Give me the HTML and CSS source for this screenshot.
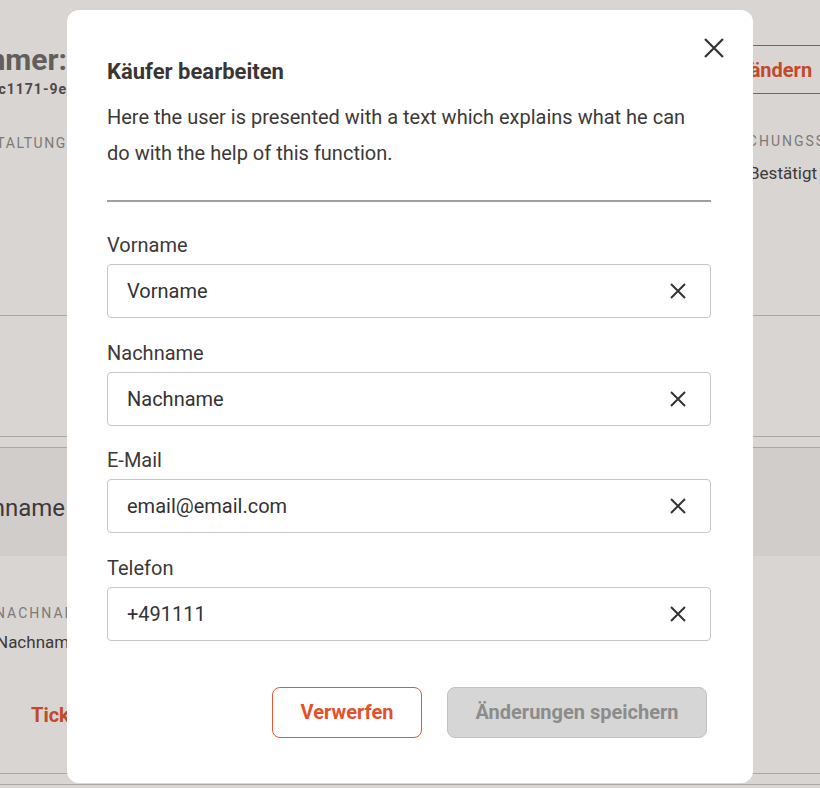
FILE: index.html
```html
<!DOCTYPE html>
<html lang="de">
<head>
<meta charset="utf-8">
<title>Käufer bearbeiten</title>
<link rel="stylesheet" href="styles.css">
</head>
<body>
<div class="page">
  <section class="head">
    <div class="head-left">
      <h1 class="order-title">Bestellnummer:</h1>
      <div class="order-id">8d3c1171-9e</div>
      <div class="caps-label head-label">VERANSTALTUNG</div>
    </div>
    <div class="head-right">
      <button class="edit-btn">Käufer ändern</button>
      <div class="caps-label status-label">BUCHUNGSSTATUS</div>
      <div class="status-value">Bestätigt</div>
    </div>
  </section>
  <section class="block-mid"></section>
  <div class="gap-row"></div>
  <section class="band">
    <div class="band-left">Vorname Nachname</div>
  </section>
  <section class="details">
    <div class="caps-label detail-label">NACHNAME</div>
    <div class="detail-value">Nachname</div>
    <a class="tickets-link">Tickets anzeigen</a>
  </section>
  <div class="foot-row"></div>
</div>

<div class="overlay">
  <div class="dialog" role="dialog">
    <button class="close-btn" aria-label="Schließen">
      <svg width="24" height="24" viewBox="0 0 24 24"><path d="M3 3 L21 21 M21 3 L3 21" stroke="#333" stroke-width="2.2" fill="none"/></svg>
    </button>
    <h2 class="dialog-title">Käufer bearbeiten</h2>
    <p class="dialog-desc">Here the user is presented with a text which explains what he can do with the help of this function.</p>
    <hr class="divider">
    <div class="fields">
      <div class="field">
        <label class="field-label">Vorname</label>
        <div class="input-box"><span class="input-value">Vorname</span><svg class="clear" width="16" height="16" viewBox="0 0 16 16"><path d="M1 1 L15 15 M15 1 L1 15" stroke="#333" stroke-width="2" fill="none"/></svg></div>
      </div>
      <div class="field">
        <label class="field-label">Nachname</label>
        <div class="input-box"><span class="input-value">Nachname</span><svg class="clear" width="16" height="16" viewBox="0 0 16 16"><path d="M1 1 L15 15 M15 1 L1 15" stroke="#333" stroke-width="2" fill="none"/></svg></div>
      </div>
      <div class="field">
        <label class="field-label">E-Mail</label>
        <div class="input-box"><span class="input-value">email@email.com</span><svg class="clear" width="16" height="16" viewBox="0 0 16 16"><path d="M1 1 L15 15 M15 1 L1 15" stroke="#333" stroke-width="2" fill="none"/></svg></div>
      </div>
      <div class="field">
        <label class="field-label">Telefon</label>
        <div class="input-box"><span class="input-value">+491111</span><svg class="clear" width="16" height="16" viewBox="0 0 16 16"><path d="M1 1 L15 15 M15 1 L1 15" stroke="#333" stroke-width="2" fill="none"/></svg></div>
      </div>
    </div>
    <div class="actions">
      <button class="btn btn-outline">Verwerfen</button>
      <button class="btn btn-disabled">Änderungen speichern</button>
    </div>
  </div>
</div>
</body>
</html>
```

FILE: styles.css
```css
* { box-sizing: border-box; }
html, body { margin: 0; padding: 0; overflow: hidden; }
body {
  width: 820px;
  height: 788px;
  background: #d9d5d3;
  font-family: Roboto, "Liberation Sans", sans-serif;
  color: #3d3937;
}

/* ---------- background page ---------- */
.page { width: 820px; }

.head {
  display: flex;
  justify-content: space-between;
  height: 316px;
  border-bottom: 1px solid #aaa6a4;
}
.head-left {
  width: 67px;
  display: flex;
  flex-direction: column;
  align-items: flex-end;
  white-space: nowrap;
  padding-top: 42px;
}
.order-title {
  margin: 0;
  font-size: 30px;
  line-height: 36px;
  font-weight: 700;
  color: #625e5c;
}
.order-id {
  margin-top: 1px;
  font-size: 14px;
  line-height: 20px;
  font-weight: 700;
  letter-spacing: 1px;
  color: #4d4947;
}
.caps-label {
  font-size: 14px;
  line-height: 20px;
  letter-spacing: 1.6px;
  color: #7d7977;
  white-space: nowrap;
}
.head-label { margin-top: 34px; }

.head-right {
  width: 260px;
  display: flex;
  flex-direction: column;
  align-items: flex-start;
  white-space: nowrap;
  padding-top: 45px;
  margin-right: -100px;
}
.edit-btn {
  height: 49px;
  padding: 0 24px;
  border: 1px solid #c24a2b;
  border-radius: 6px;
  background: transparent;
  font-family: Roboto, "Liberation Sans", sans-serif;
  font-size: 20px;
  font-weight: 700;
  color: #c24a2b;
}
.status-label { margin-top: 37px; margin-left: 66px; letter-spacing: 2px; }
.status-value {
  margin-top: 11px;
  margin-left: 89px;
  font-size: 17px;
  line-height: 22px;
  color: #3d3937;
}

.block-mid {
  height: 121px;
  border-bottom: 1px solid #aaa6a4;
}
.gap-row { height: 10px; }
.band {
  height: 109px;
  border-top: 1px solid #aaa6a4;
  background: #d1cdcb;
  display: flex;
  align-items: center;
  padding-top: 12px;
}
.band-left {
  width: 65px;
  display: flex;
  justify-content: flex-end;
  white-space: nowrap;
  font-size: 24px;
  line-height: 28px;
  color: #3d3937;
}

.details {
  height: 218px;
  border-bottom: 1px solid #aaa6a4;
  display: flex;
  flex-direction: column;
  align-items: flex-start;
  padding-top: 47px;
}
.detail-label { margin-left: -5px; letter-spacing: 2px; }
.detail-value {
  margin-left: -4px;
  margin-top: 8px;
  font-size: 17px;
  line-height: 22px;
  white-space: nowrap;
}
.tickets-link {
  margin-top: 50px;
  margin-left: 31px;
  font-size: 20px;
  line-height: 24px;
  font-weight: 700;
  color: #c24a2b;
  white-space: nowrap;
}
.foot-row {
  height: 11px;
  border-bottom: 1px solid #aaa6a4;
}

/* ---------- modal ---------- */
.overlay {
  position: fixed;
  inset: 0;
  display: flex;
  justify-content: center;
  align-items: flex-start;
  padding-top: 10px;
}
.dialog {
  position: relative;
  width: 686px;
  background: #ffffff;
  border-radius: 12px;
  padding: 50px 42px 45px 40px;
}
.close-btn {
  position: absolute;
  top: 26px;
  right: 27px;
  width: 24px;
  height: 24px;
  padding: 0;
  border: 0;
  background: none;
  display: flex;
}
.dialog-title {
  margin: 0;
  font-size: 22px;
  line-height: 24px;
  font-weight: 700;
  color: #3a3634;
}
.dialog-desc {
  margin: 15px 0 0;
  max-width: 590px;
  font-size: 20px;
  line-height: 36px;
  color: #3d3937;
}
.divider {
  margin: 29px 0 0;
  border: 0;
  height: 2px;
  background: #a0a0a0;
}
.fields {
  margin-top: 30px;
  display: flex;
  flex-direction: column;
  gap: 21.5px;
}
.field { display: flex; flex-direction: column; }
.field-label {
  font-size: 20px;
  line-height: 26px;
  color: #3d3937;
  margin-bottom: 6px;
}
.input-box {
  height: 54px;
  border: 1px solid #c6c6c6;
  border-radius: 4px;
  display: flex;
  align-items: center;
  justify-content: space-between;
  padding: 0 24px 0 19px;
}
.input-value {
  font-size: 20px;
  color: #333333;
}
.clear { flex: none; }

.actions {
  margin-top: 46px;
  display: flex;
  justify-content: flex-end;
  gap: 25px;
  padding-right: 4px;
}
.btn {
  height: 51px;
  border-radius: 8px;
  font-family: Roboto, "Liberation Sans", sans-serif;
  font-size: 20px;
  font-weight: 700;
  padding: 0;
}
.btn-outline {
  width: 150px;
  border: 1px solid #e8552f;
  background: #ffffff;
  color: #e5502b;
}
.btn-disabled {
  width: 260px;
  border: 1px solid #c2c2c2;
  background: #d6d6d6;
  color: #8c8c8c;
}
```
